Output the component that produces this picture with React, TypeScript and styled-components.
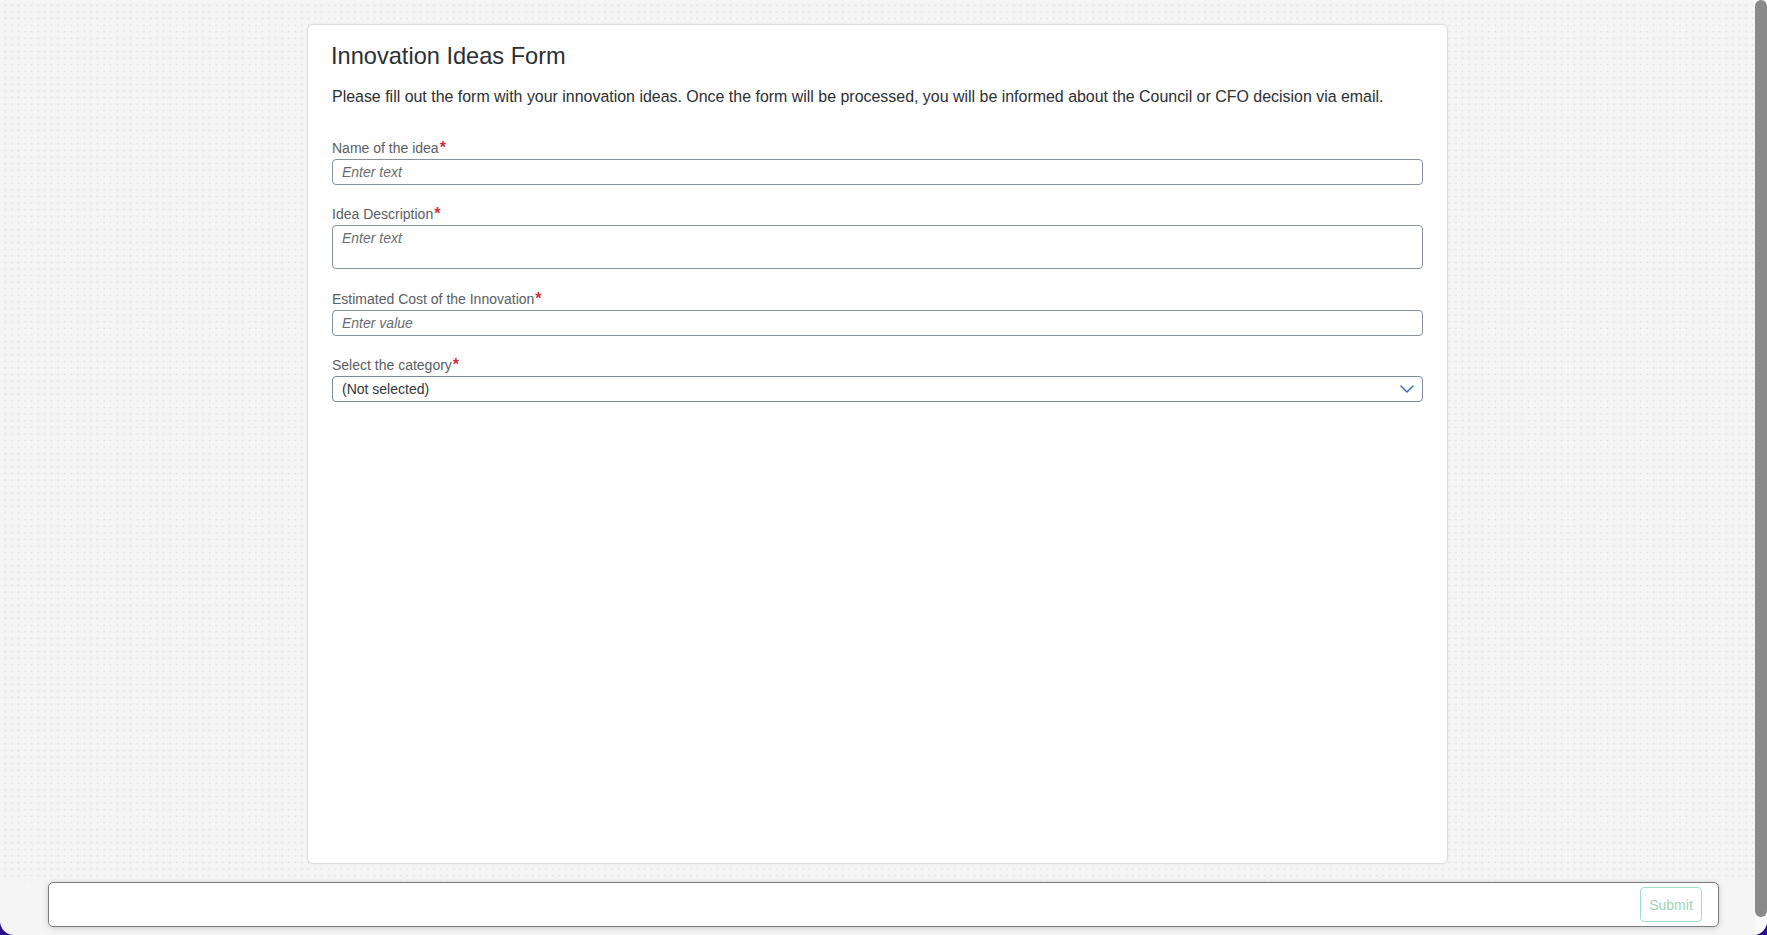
import React from "react";
import styled, { createGlobalStyle } from "styled-components";

const GlobalStyle = createGlobalStyle`
  html, body {
    margin: 0;
    padding: 0;
    width: 100%;
    height: 100%;
    overflow: hidden;
    background: #2a0b8c;
  }
  * { box-sizing: border-box; }
  #root { height: 100%; }
`;

const Viewport = styled.div`
  width: 100vw;
  height: 100vh;
  background: #2a0b8c;
  font-family: "Liberation Sans", Arial, sans-serif;
`;

const Shell = styled.div`
  width: 100%;
  height: 100%;
  display: flex;
  background: #f5f5f5;
  border-radius: 0 0 14px 14px;
  overflow: hidden;
`;

const MainColumn = styled.div`
  flex: 1;
  display: flex;
  flex-direction: column;
  min-width: 0;
`;

const DottedArea = styled.div`
  flex: 1;
  display: flex;
  justify-content: center;
  align-items: flex-start;
  padding-top: 24px;
  background-color: #f5f5f5;
  background-image: radial-gradient(circle, #d6d6d6 0.7px, transparent 1px);
  background-size: 6.6px 6.6px;
  background-position: 2px 2px;
`;

const Card = styled.section`
  width: 1141px;
  height: 840px;
  background: #ffffff;
  border: 1px solid #dedede;
  border-radius: 6px;
  box-shadow: 0 0 2px rgba(0, 0, 0, 0.08);
  padding: 17px 24px 0 24px;
  display: flex;
  flex-direction: column;
`;

const Title = styled.h1`
  margin: 0 0 0 -1px;
  font-size: 23.6px;
  line-height: 28px;
  font-weight: 400;
  color: #2b2f33;
`;

const Intro = styled.p`
  margin: 16px 0 0 0;
  font-size: 15.95px;
  line-height: 22px;
  color: #2b2f33;
`;

const Fields = styled.div`
  margin-top: 31px;
  display: flex;
  flex-direction: column;
  gap: 20.4px;
`;

const Field = styled.div`
  display: flex;
  flex-direction: column;
  gap: 2px;
`;

const Label = styled.label`
  font-size: 14px;
  line-height: 18px;
  color: #5a5e62;
`;

const Required = styled.span`
  color: #d0303b;
  font-weight: 700;
  font-size: 16px;
  line-height: 14px;
  margin-left: 1px;
`;

const inputBase = `
  width: 100%;
  border: 1px solid #89919a;
  border-radius: 4px;
  background: #ffffff;
  font-family: "Liberation Sans", Arial, sans-serif;
  font-size: 14px;
  color: #32363a;
  padding: 0 9px;
  outline: none;
  &::placeholder {
    color: #6a6d70;
    font-style: italic;
    opacity: 1;
  }
`;

const TextInput = styled.input`
  ${inputBase}
  height: 26px;
`;

const TextArea = styled.textarea`
  ${inputBase}
  height: 44px;
  padding-top: 3px;
  resize: none;
  line-height: 18px;
`;

const SelectBox = styled.div`
  ${inputBase}
  height: 26px;
  display: flex;
  align-items: center;
  justify-content: space-between;
  border-color: #7d8a99;
  padding-right: 8px;
`;

const SelectValue = styled.span`
  color: #32363a;
  font-size: 14px;
`;

const Chevron = styled.svg`
  width: 14px;
  height: 8px;
  display: block;
`;

const FooterWrap = styled.div`
  padding: 0 36px 8px 48px;
`;

const Footer = styled.footer`
  height: 45px;
  background: #ffffff;
  border: 1px solid #7c7c7c;
  border-radius: 5px;
  box-shadow: 0 1px 6px rgba(0, 0, 0, 0.18);
  display: flex;
  align-items: center;
  justify-content: flex-end;
  padding-right: 16px;
`;

const SubmitButton = styled.button`
  width: 62px;
  height: 35px;
  border: 1px solid #a6dcc2;
  border-radius: 4px;
  background: #ffffff;
  color: #9fd3b9;
  font-family: "Liberation Sans", Arial, sans-serif;
  font-size: 14px;
  padding: 0;
  cursor: default;
`;

const ScrollTrack = styled.div`
  width: 12px;
  background: #fafafa;
  display: flex;
  flex-direction: column;
`;

const ScrollThumb = styled.div`
  height: 917px;
  background: #8a8a8a;
  border-radius: 6px;
`;

function Req() {
  return <Required>*</Required>;
}

export default function App() {
  return (
    <>
      <GlobalStyle />
      <Viewport>
        <Shell>
          <MainColumn>
            <DottedArea>
              <Card>
                <Title>Innovation Ideas Form</Title>
                <Intro>
                  Please fill out the form with your innovation ideas. Once the form will be processed, you
                  will be informed about the Council or CFO decision via email.
                </Intro>
                <Fields>
                  <Field>
                    <Label>
                      Name of the idea
                      <Req />
                    </Label>
                    <TextInput placeholder="Enter text" />
                  </Field>
                  <Field>
                    <Label>
                      Idea Description
                      <Req />
                    </Label>
                    <TextArea placeholder="Enter text" />
                  </Field>
                  <Field>
                    <Label>
                      Estimated Cost of the Innovation
                      <Req />
                    </Label>
                    <TextInput placeholder="Enter value" />
                  </Field>
                  <Field>
                    <Label>
                      Select the category
                      <Req />
                    </Label>
                    <SelectBox>
                      <SelectValue>(Not selected)</SelectValue>
                      <Chevron viewBox="0 0 14 8">
                        <path d="M1 1 L7 7 L13 1" fill="none" stroke="#2f67b3" strokeWidth="1.4" strokeLinecap="round" strokeLinejoin="round" />
                      </Chevron>
                    </SelectBox>
                  </Field>
                </Fields>
              </Card>
            </DottedArea>
            <FooterWrap>
              <Footer>
                <SubmitButton>Submit</SubmitButton>
              </Footer>
            </FooterWrap>
          </MainColumn>
          <ScrollTrack>
            <ScrollThumb />
          </ScrollTrack>
        </Shell>
      </Viewport>
    </>
  );
}
